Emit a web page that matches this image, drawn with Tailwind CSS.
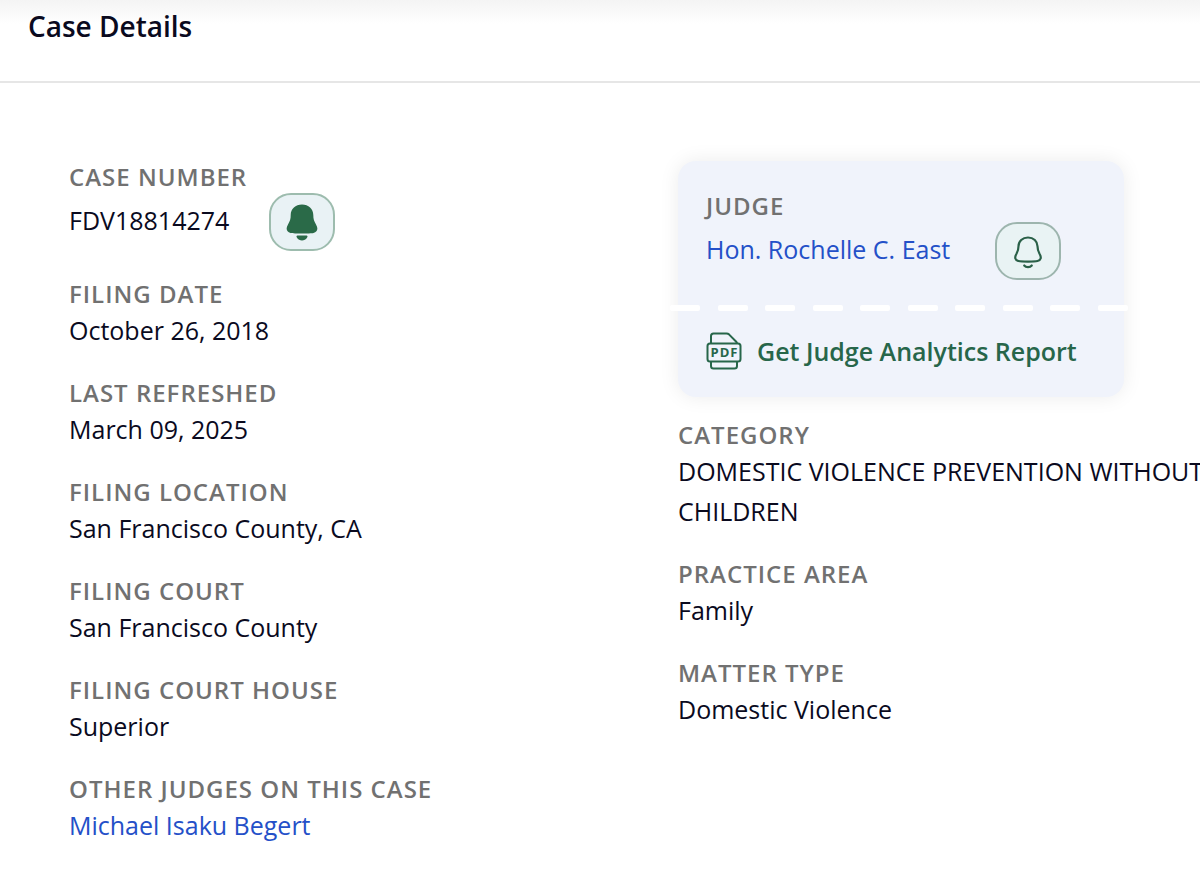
<!DOCTYPE html>
<html lang="en">
<head>
  <meta charset="UTF-8" />
  <meta name="viewport" content="width=device-width, initial-scale=1.0"/>
  <title>Case Details</title>
  <script src="https://cdn.jsdelivr.net/npm/@tailwindcss/browser@4"></script>
</head>
<body class="bg-white text-[#0a0a1e] font-['Open_Sans',sans-serif] text-[25px] leading-10 overflow-x-hidden">

  <!-- Header -->
  <header class="border-b-2 border-[#e6e6e6] bg-linear-to-b from-[#f4f4f4] to-white to-30% px-7 pt-[6px] pb-[35px]">
    <h1 class="text-[28px] leading-10 font-semibold">Case Details</h1>
  </header>

  <main class="grid grid-cols-[7fr_6fr] pl-[69px] pt-[78px] pb-8">

    <!-- Left column -->
    <dl class="flex min-w-0 flex-col gap-[27px]">
      <div>
        <dt class="text-2xl leading-8 font-semibold tracking-[1px] text-[#717171]">CASE NUMBER</dt>
        <dd class="flex items-center gap-10">
          <span class="pb-1">FDV18814274</span>
          <button type="button" aria-label="Case alerts on" class="flex h-[58px] w-[66px] items-center justify-center rounded-[22px] border-2 border-[#9dbcae] bg-[#e9f2f5]">
            <svg class="h-[38px] w-8" viewBox="0 0 32 38" fill="#2a6a48">
              <path d="M16 1.500C9.500 1.500 4.700 6 4.700 12C4.700 16 4 18 2 21.500C-0.500 25.500 0.500 29 4.500 30C8 30.800 24 30.800 27.500 30C31.500 29 32.500 25.500 30 21.500C28 18 27.300 16 27.300 12C27.300 6 22.500 1.500 16 1.500Z"/>
              <path d="M12 32.500H20C21.500 32.500 22 33.500 21 34.700C18.800 38.300 13.200 38.300 11 34.700C10 33.500 10.500 32.500 12 32.500Z"/>
            </svg>
          </button>
        </dd>
      </div>
      <div>
        <dt class="text-2xl leading-8 font-semibold tracking-[1px] text-[#717171]">FILING DATE</dt>
        <dd>October 26, 2018</dd>
      </div>
      <div>
        <dt class="text-2xl leading-8 font-semibold tracking-[1px] text-[#717171]">LAST REFRESHED</dt>
        <dd>March 09, 2025</dd>
      </div>
      <div>
        <dt class="text-2xl leading-8 font-semibold tracking-[1px] text-[#717171]">FILING LOCATION</dt>
        <dd>San Francisco County, CA</dd>
      </div>
      <div>
        <dt class="text-2xl leading-8 font-semibold tracking-[1px] text-[#717171]">FILING COURT</dt>
        <dd>San Francisco County</dd>
      </div>
      <div>
        <dt class="text-2xl leading-8 font-semibold tracking-[1px] text-[#717171]">FILING COURT HOUSE</dt>
        <dd>Superior</dd>
      </div>
      <div>
        <dt class="text-2xl leading-8 font-semibold tracking-[1px] text-[#717171]">OTHER JUDGES ON THIS CASE</dt>
        <dd><a href="#" class="text-[#2450c8]">Michael Isaku Begert</a></dd>
      </div>
    </dl>

    <!-- Right column -->
    <div class="min-w-0">
      <section class="w-[446px] rounded-[18px] bg-[#f0f3fb] shadow-[0_0_20px_rgba(0,0,0,0.08)]">
        <div class="px-7 pt-[29px] pb-[25px]">
          <h2 class="text-2xl leading-8 font-semibold tracking-[1px] text-[#717171]">JUDGE</h2>
          <div class="flex items-center gap-[45px]">
            <a href="#" class="pb-1 text-[#2450c8]">Hon. Rochelle C. East</a>
            <button type="button" aria-label="Judge alerts off" class="flex h-[58px] w-[66px] items-center justify-center rounded-[22px] border-2 border-[#9db5ae] bg-[#e9f3f4]">
              <svg class="h-[38px] w-8" viewBox="0 0 32 38" fill="none" stroke="#2a6048" stroke-width="2.200" stroke-linecap="round">
                <path d="M16 5.500C10.500 5.500 6.500 9.300 6.500 14.300C6.500 17.500 6 19 4.500 21.800C2.300 25.500 3 28.300 6.500 29C9.500 29.700 22.500 29.700 25.500 29C29 28.300 29.700 25.500 27.500 21.800C26 19 25.500 17.500 25.500 14.300C25.500 9.300 21.500 5.500 16 5.500Z"/>
                <path d="M12.200 33.500C14 35.700 18 35.700 19.800 33.500"/>
              </svg>
            </button>
          </div>
        </div>

        <!-- Perforation -->
        <div class="-ml-2 -mr-1 flex justify-between">
          <span class="h-[6px] w-[30px] rounded-[2px] bg-white"></span>
          <span class="h-[6px] w-[30px] rounded-[2px] bg-white"></span>
          <span class="h-[6px] w-[30px] rounded-[2px] bg-white"></span>
          <span class="h-[6px] w-[30px] rounded-[2px] bg-white"></span>
          <span class="h-[6px] w-[30px] rounded-[2px] bg-white"></span>
          <span class="h-[6px] w-[30px] rounded-[2px] bg-white"></span>
          <span class="h-[6px] w-[30px] rounded-[2px] bg-white"></span>
          <span class="h-[6px] w-[30px] rounded-[2px] bg-white"></span>
          <span class="h-[6px] w-[30px] rounded-[2px] bg-white"></span>
          <span class="h-[6px] w-[30px] rounded-[2px] bg-white"></span>
        </div>

        <a href="#" class="flex items-center gap-[15px] px-7 pt-5 pb-[26px] font-semibold text-[#27664a]">
          <svg class="h-[38px] w-9" viewBox="0 0 36 38" fill="none" stroke="#27664a" stroke-width="2" stroke-linejoin="round">
            <path d="M5 11.500V4Q5 1.500 7.500 1.500H20.500Q22 1.500 23.200 2.600L30 9.500Q31 10.600 31 11.500"/>
            <rect x="1.500" y="11.500" width="33" height="18" rx="2.500"/>
            <path d="M5 29.500V34Q5 36.500 7.500 36.500H28.500Q31 36.500 31 34V29.500"/>
            <text x="18.500" y="25.200" text-anchor="middle" font-size="13" font-weight="700" letter-spacing="1" fill="#27664a" stroke="none">PDF</text>
          </svg>
          <span>Get Judge Analytics Report</span>
        </a>
      </section>

      <dl class="mt-[22px] flex flex-col gap-[27px]">
        <div>
          <dt class="text-2xl leading-8 font-semibold tracking-[1px] text-[#717171]">CATEGORY</dt>
          <dd class="whitespace-nowrap">DOMESTIC VIOLENCE PREVENTION WITHOUT<br>CHILDREN</dd>
        </div>
        <div>
          <dt class="text-2xl leading-8 font-semibold tracking-[1px] text-[#717171]">PRACTICE AREA</dt>
          <dd>Family</dd>
        </div>
        <div>
          <dt class="text-2xl leading-8 font-semibold tracking-[1px] text-[#717171]">MATTER TYPE</dt>
          <dd>Domestic Violence</dd>
        </div>
      </dl>
    </div>

  </main>

</body>
</html>
